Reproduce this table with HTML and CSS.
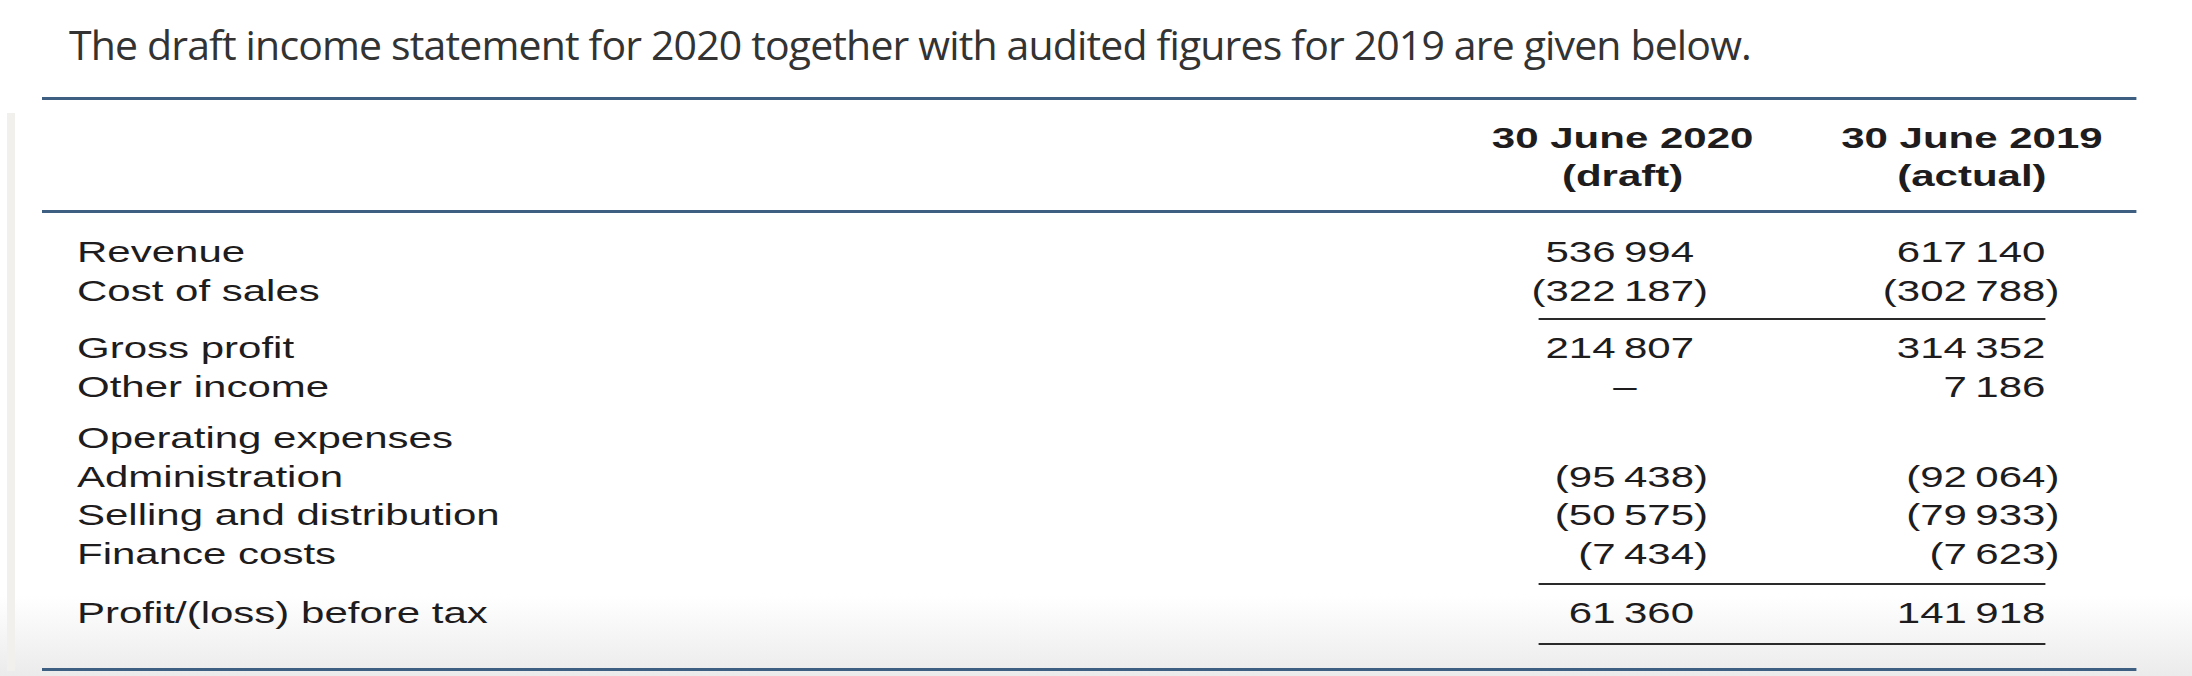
FILE: index.html
```html
<!DOCTYPE html>
<html lang="en">
<head>
<meta charset="utf-8">
<title>Income statement</title>
<link rel="stylesheet" href="styles.css">
</head>
<body>
<p class="intro">The draft income statement for 2020 together with audited figures for 2019 are given below.</p>
<div class="figure">
  <div class="side-bar"></div>
  <div class="table-wrap">
    <div class="rule-blue"></div>
    <div class="row head">
      <div></div>
      <div class="hcell">30 June 2020<br>(draft)</div>
      <div class="hcell">30 June 2019<br>(actual)</div>
    </div>
    <div class="rule-blue"></div>
    <div class="body">
      <div class="row"><div class="lbl">Revenue</div><div class="num c1">536&#8201;994</div><div class="num c2">617&#8201;140</div></div>
      <div class="row"><div class="lbl">Cost of sales</div><div class="num c1"><span class="neg">(322&#8201;187)</span></div><div class="num c2"><span class="neg">(302&#8201;788)</span></div></div>
      <div class="row sum-rule"><div></div><span class="line"></span></div>
      <div class="row"><div class="lbl">Gross profit</div><div class="num c1">214&#8201;807</div><div class="num c2">314&#8201;352</div></div>
      <div class="row"><div class="lbl">Other income</div><div class="num c1"><span class="dash">&#8211;</span></div><div class="num c2">7&#8201;186</div></div>
      <div class="row spaced"><div class="lbl">Operating expenses</div><div></div><div></div></div>
      <div class="row"><div class="lbl">Administration</div><div class="num c1"><span class="neg">(95&#8201;438)</span></div><div class="num c2"><span class="neg">(92&#8201;064)</span></div></div>
      <div class="row"><div class="lbl">Selling and distribution</div><div class="num c1"><span class="neg">(50&#8201;575)</span></div><div class="num c2"><span class="neg">(79&#8201;933)</span></div></div>
      <div class="row"><div class="lbl">Finance costs</div><div class="num c1"><span class="neg">(7&#8201;434)</span></div><div class="num c2"><span class="neg">(7&#8201;623)</span></div></div>
      <div class="row sum-rule wide"><div></div><span class="line"></span></div>
      <div class="row"><div class="lbl">Profit/(loss) before tax</div><div class="num c1">61&#8201;360</div><div class="num c2">141&#8201;918</div></div>
      <div class="row sum-rule last"><div></div><span class="line"></span></div>
    </div>
    <div class="rule-blue"></div>
  </div>
</div>
</body>
</html>
```
FILE: styles.css
```css
html, body {
  margin: 0;
  padding: 0;
  overflow: hidden;
}

body {
  height: 676px;
  background: linear-gradient(to bottom, #ffffff 0, #ffffff 596px, #ebebeb 676px);
}

.intro {
  margin: 16px 0 0;
  padding-left: 69px;
  font-family: "Open Sans", "Noto Sans", sans-serif;
  font-size: 41px;
  line-height: 56px;
  letter-spacing: -0.85px;
  color: #333333;
}

.figure {
  display: flex;
  margin-top: 25px;
  padding-bottom: 6px;
}

.side-bar {
  width: 8px;
  margin: 16px 0 0 7px;
  background: #f1f0ec;
  flex: none;
}

.table-wrap {
  --cols: 1fr 240px 235px;
  width: 1496px;
  margin-left: 27px;
  flex: none;
  transform: scaleX(1.4);
  transform-origin: 0 0;
  font-family: "Liberation Sans", Arial, sans-serif;
  font-size: 30px;
  color: #1e1c1d;
}

.rule-blue {
  height: 3px;
  background: #3e5f81;
}

.row {
  display: grid;
  grid-template-columns: var(--cols);
  column-gap: 12px;
  line-height: 38.5px;
  white-space: nowrap;
}

.head {
  padding: 19px 0 15px;
  line-height: 38px;
  font-weight: 700;
}

.hcell {
  text-align: center;
}

.body {
  padding-top: 20px;
}

.lbl {
  padding-left: 25px;
}

.num {
  text-align: right;
}

.c1 {
  padding-right: 69px;
}

.c2 {
  padding-right: 65px;
}

.neg {
  margin-right: -10px;
}

.dash {
  padding-right: 41px;
}

.spaced {
  margin-top: 13px;
}

.sum-rule {
  margin: 8px 0 9px;
  line-height: 0;
}

.sum-rule.wide {
  margin: 10px 0 9px;
}

.sum-rule.last {
  margin: 10px 0 23px;
}

.sum-rule .line {
  grid-column: 2 / 4;
  height: 2px;
  margin: 0 65px 0 60px;
  background: #2a2a2a;
}
```
